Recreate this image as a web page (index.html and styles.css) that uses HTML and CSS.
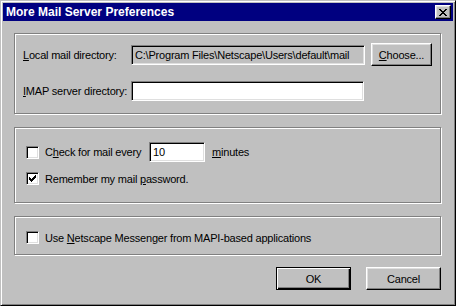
FILE: index.html
```html
<!DOCTYPE html>
<html>
<head>
<meta charset="utf-8">
<link rel="stylesheet" href="styles.css">
</head>
<body>
<div class="window">
  <div class="titlebar">
    <span class="title">More Mail Server Preferences</span>
    <span class="close">
      <svg width="8" height="7" viewBox="0 0 8 7" shape-rendering="crispEdges">
        <path d="M0 0h2v1h-2zM6 0h2v1h-2zM1 1h2v1h-2zM5 1h2v1h-2zM2 2h4v1h-4zM3 3h2v1h-2zM2 4h4v1h-4zM1 5h2v1h-2zM5 5h2v1h-2zM0 6h2v1h-2zM6 6h2v1h-2z" fill="#000"/>
      </svg>
    </span>
  </div>
  <div class="content">
    <div class="group g1">
      <div class="row r1">
        <span class="label"><u>L</u>ocal mail directory:</span>
        <span class="field readonly">C:\Program Files\Netscape\Users\default\mail</span>
        <span class="btn choose"><u>C</u>hoose...</span>
      </div>
      <div class="row r2">
        <span class="label"><u>I</u>MAP server directory:</span>
        <span class="field imap"></span>
      </div>
    </div>
    <div class="group g2">
      <div class="row c1">
        <span class="check"></span>
        <span class="ctext every">C<u>h</u>eck for mail every</span>
        <span class="field minutes">10</span>
        <span class="ctext unit"><u>m</u>inutes</span>
      </div>
      <div class="row c2">
        <span class="check">
          <svg width="7" height="7" viewBox="0 0 7 7" shape-rendering="crispEdges">
            <path d="M6 0h1v1h-1zM5 1h2v1h-2zM0 2h1v1h-1zM4 2h3v1h-3zM0 3h2v1h-2zM3 3h3v1h-3zM0 4h5v1h-5zM1 5h3v1h-3zM2 6h1v1h-1z" fill="#000"/>
          </svg>
        </span>
        <span class="ctext">Remember my mail <u>p</u>assword.</span>
      </div>
    </div>
    <div class="group g3">
      <div class="row c3">
        <span class="check"></span>
        <span class="ctext">Use <u>N</u>etscape Messenger from MAPI-based applications</span>
      </div>
    </div>
    <div class="buttons">
      <span class="btn default">OK</span>
      <span class="btn">Cancel</span>
    </div>
  </div>
</div>
</body>
</html>
```

FILE: styles.css
```css
html, body {
  margin: 0;
  padding: 0;
  background: #c0c0c0;
}
body {
  font-family: "Liberation Sans", Arial, sans-serif;
  font-size: 11px;
  letter-spacing: -0.2px;
  color: #000;
}
u { text-decoration: underline; text-underline-offset: 1px; }

.window {
  width: 456px;
  height: 306px;
  box-sizing: border-box;
  border: 1px solid;
  border-color: #c0c0c0 #000 #000 #c0c0c0;
  box-shadow: inset 1px 1px #fff, inset -1px -1px #808080;
  padding: 2px;
  background: #c0c0c0;
}

.titlebar {
  height: 18px;
  background: #000080;
  display: flex;
  align-items: center;
  justify-content: space-between;
  padding: 0 2px 0 3px;
}
.title {
  color: #fff;
  font-weight: bold;
  font-size: 12px;
  letter-spacing: 0;
  line-height: 18px;
  white-space: nowrap;
}
.close {
  width: 16px;
  height: 14px;
  box-sizing: border-box;
  background: #c0c0c0;
  border: 1px solid;
  border-color: #fff #000 #000 #fff;
  box-shadow: inset -1px -1px #808080, inset 1px 1px #dfdfdf;
  display: flex;
  align-items: center;
  justify-content: center;
  padding-right: 1px;
}
.close svg { display: block; }

.content {
  padding: 12px 12px 0 11px;
}

.group {
  box-sizing: border-box;
  border: 1px solid #808080;
  box-shadow: inset 1px 1px #fff, 1px 1px #fff;
}
.g1 { height: 81px; padding: 9px 0 0 8px; }
.g2 { height: 76px; margin-top: 13px; padding: 14px 0 0 11px; }
.g3 { height: 39px; margin-top: 13px; padding: 14px 0 0 11px; }

.row {
  display: flex;
  align-items: center;
  white-space: nowrap;
}
.r1 { height: 23px; }
.r2 { height: 20px; margin-top: 15px; }
.c1 { height: 20px; }
.c2 { height: 13px; margin-top: 10px; }
.c3 { height: 13px; }

.label { width: 108px; flex: none; }

.field {
  box-sizing: border-box;
  height: 20px;
  border: 1px solid;
  border-color: #808080 #fff #fff #808080;
  box-shadow: inset 1px 1px #000, inset -1px -1px #dfdfdf;
  background: #fff;
  padding: 0 3px;
  line-height: 18px;
  overflow: hidden;
  flex: none;
}
.readonly { width: 234px; background: #c0c0c0; }
.imap { width: 233px; }
.minutes { width: 56px; }

.btn {
  box-sizing: border-box;
  width: 75px;
  height: 23px;
  border: 1px solid;
  border-color: #fff #000 #000 #fff;
  box-shadow: inset -1px -1px #808080, inset 1px 1px #dfdfdf;
  background: #c0c0c0;
  display: flex;
  align-items: center;
  justify-content: center;
  flex: none;
}
.btn.default {
  border-color: #000;
  box-shadow: inset 1px 1px #fff, inset -1px -1px #000, inset -2px -2px #808080;
}
.choose { width: 61px; margin-left: 6px; }

.check {
  box-sizing: border-box;
  width: 13px;
  height: 13px;
  flex: none;
  border: 1px solid;
  border-color: #808080 #fff #fff #808080;
  box-shadow: inset 1px 1px #000, inset -1px -1px #dfdfdf;
  background: #fff;
  padding: 2px;
}
.check svg { display: block; }

.ctext { margin-left: 6px; }
.every { width: 104px; flex: none; }
.unit { margin-left: 7px; }

.buttons {
  display: flex;
  justify-content: flex-end;
  gap: 15px;
  margin-top: 12px;
}
```
